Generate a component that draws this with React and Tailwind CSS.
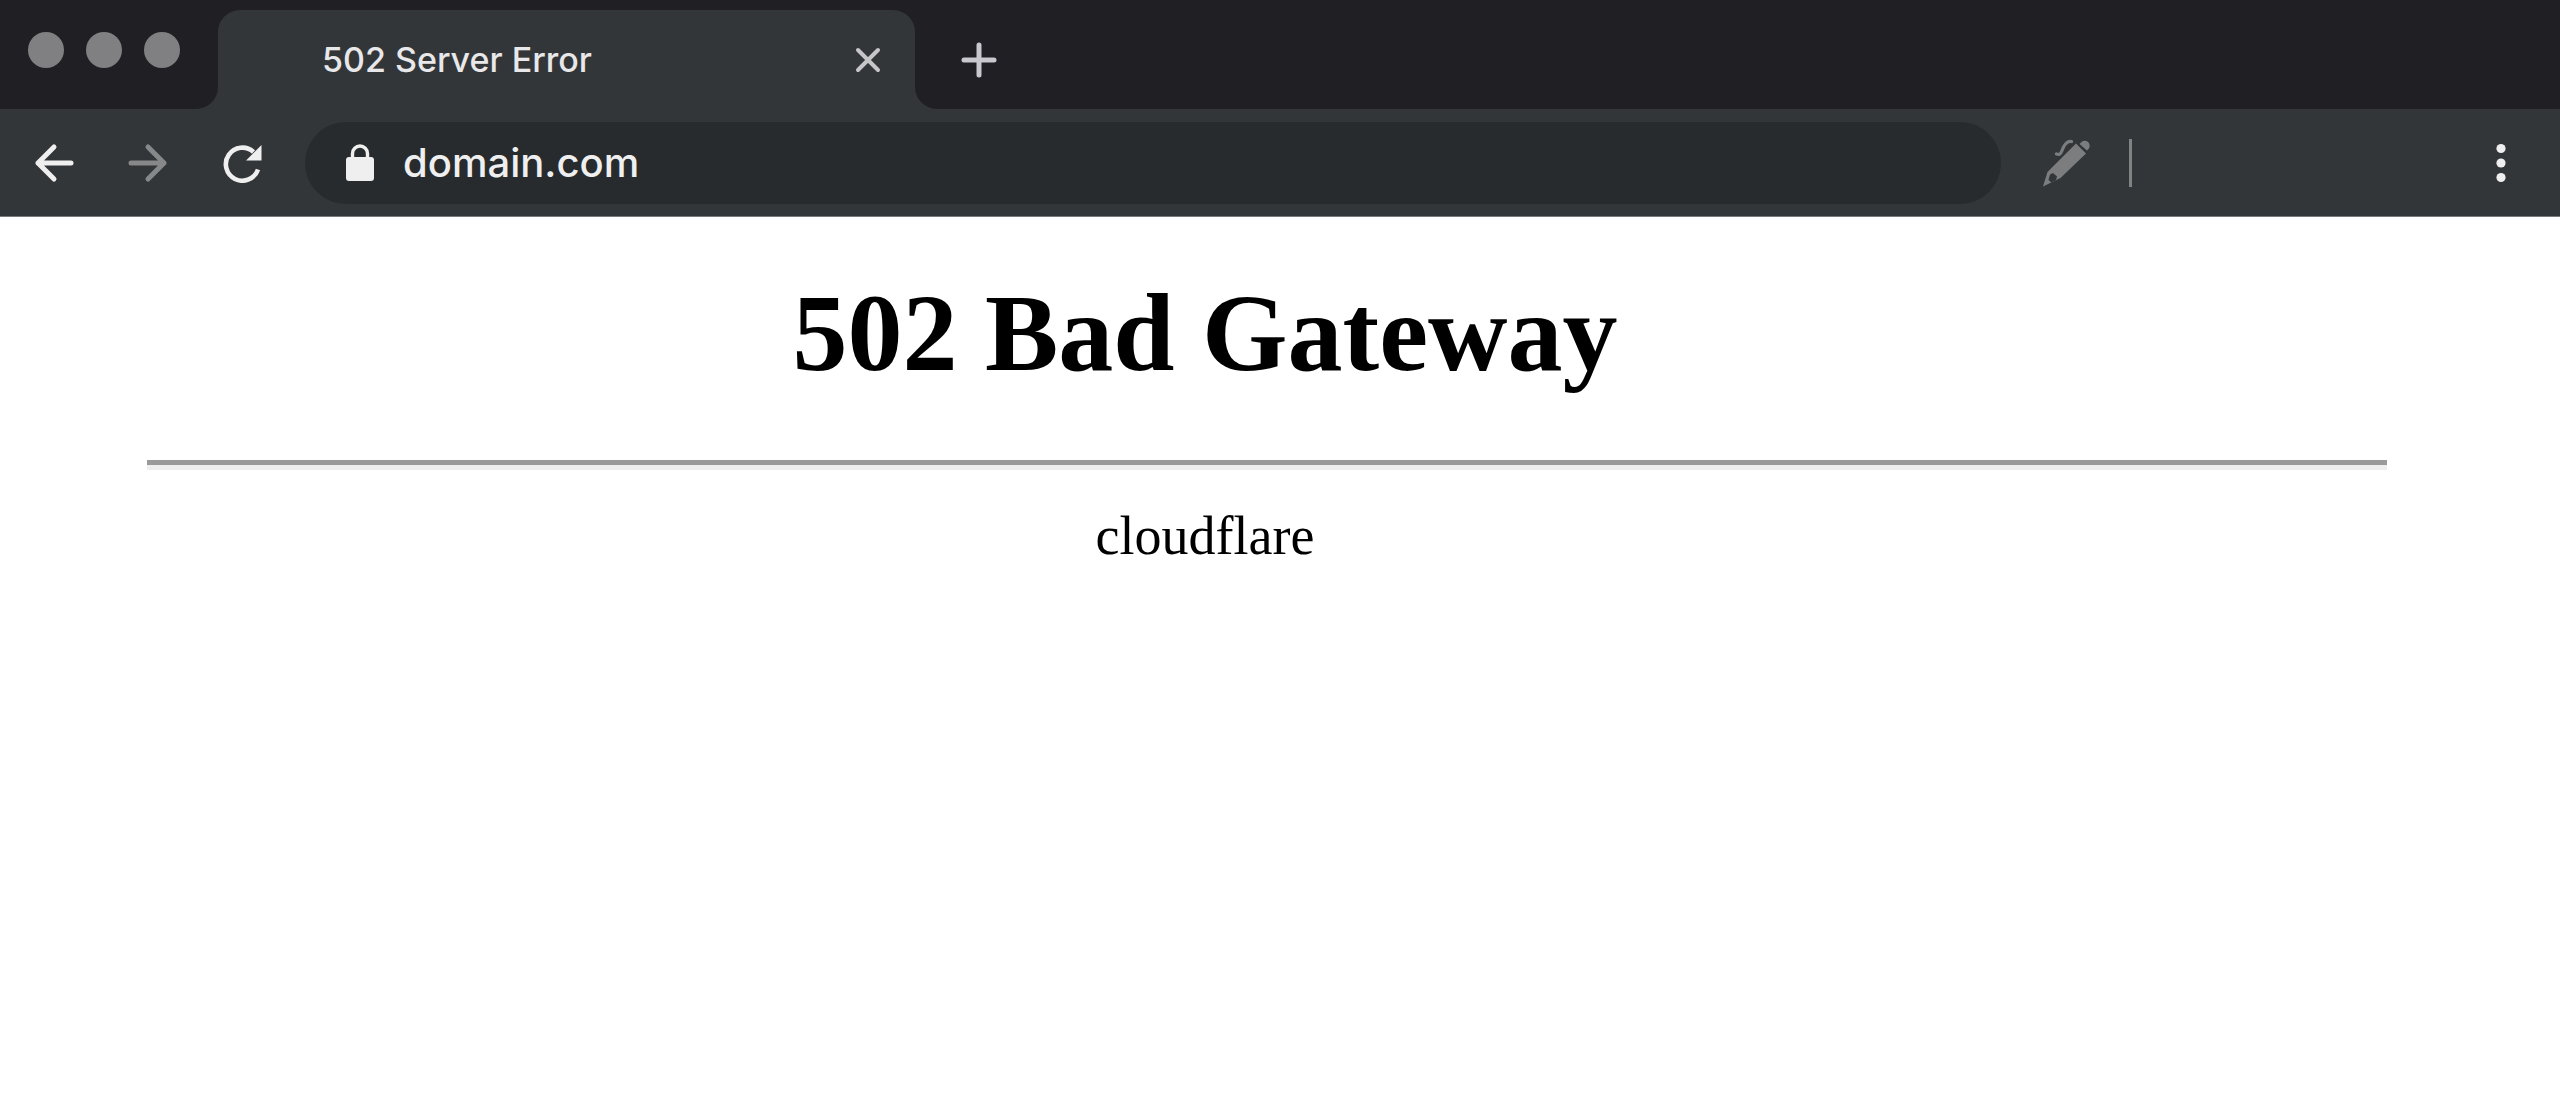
function TabBar() {
    return (
        <div className="flex h-[109px] bg-[#333638]">
            {/* Window controls */}
            <div className="flex w-[218px] shrink-0 gap-[22px] rounded-br-[22px] bg-[#201f24] pt-8 pl-7">
                <button aria-label="Close window" className="size-9 rounded-full bg-[#808083]" />
                <button aria-label="Minimize window" className="size-9 rounded-full bg-[#808083]" />
                <button aria-label="Zoom window" className="size-9 rounded-full bg-[#808083]" />
            </div>

            {/* Active tab */}
            <div className="w-[697px] shrink-0 bg-[#201f24] pt-[10px]">
                <div className="flex h-full items-center justify-between rounded-t-[22px] bg-[#333638] pr-[34px] pl-[104px]">
                    <span className="text-[34px] leading-[44px] font-medium text-[#e8e8ea]">
                        502 Server Error
                    </span>
                    <button aria-label="Close tab" className="text-[#c6c6c9]">
                        <svg
                            viewBox="0 0 26 26"
                            className="size-[26px]"
                            fill="none"
                            stroke="currentColor"
                            strokeWidth={4}
                            strokeLinecap="round"
                        >
                            <path d="M3 3l20 20M23 3L3 23" />
                        </svg>
                    </button>
                </div>
            </div>

            {/* Rest of the strip */}
            <div className="flex flex-1 items-center rounded-bl-[22px] bg-[#201f24] pt-[10px] pl-[46px]">
                <button aria-label="New tab" className="text-[#c9c8ce]">
                    <svg
                        viewBox="0 0 36 36"
                        className="size-9"
                        fill="none"
                        stroke="currentColor"
                        strokeWidth={5}
                        strokeLinecap="round"
                    >
                        <path d="M18 3v30M3 18h30" />
                    </svg>
                </button>
            </div>
        </div>
    );
}

function ArrowIcon({ className }) {
    return (
        <svg
            viewBox="0 0 40 40"
            className={className}
            fill="none"
            stroke="currentColor"
            strokeWidth={5}
            strokeLinecap="round"
            strokeLinejoin="round"
        >
            <path d="M37 20H4M20 4L4 20l16 16" />
        </svg>
    );
}

function ReloadIcon() {
    return (
        <svg viewBox="0 0 40 40" className="size-10">
            <path
                d="M36 26.500A16.500 16.500 0 1 1 31.500 9"
                fill="none"
                stroke="currentColor"
                strokeWidth={4.600}
            />
            <path d="M39.500 2v15.500H24z" fill="currentColor" />
        </svg>
    );
}

function PencilIcon() {
    return (
        <svg viewBox="0 0 48 48" className="size-12">
            <path
                d="M34 4.500L44 14.500 18.500 39 1 47.500 5.500 33z"
                fill="currentColor"
            />
            <path d="M8 35.500l3-1.500 4 3.500-1 3.500-4.500 2.500-3-2.500z" fill="#333638" />
            <path
                d="M39 3.500a4.500 4.500 0 0 1 7.500 6.500l-1.500 1.500L37.500 5z"
                fill="currentColor"
            />
            <path
                d="M14.500 15c6 2 4.500-5 9-10 2-2.500 4-3 6-2.500"
                fill="none"
                stroke="currentColor"
                strokeWidth={3.200}
                strokeLinecap="round"
            />
        </svg>
    );
}

function Toolbar() {
    return (
        <div className="flex h-[108px] items-center border-b border-[#77797b] bg-[#333638] pr-[54px] pl-[34px] text-[#efeff0]">
            <button aria-label="Back">
                <ArrowIcon className="size-10" />
            </button>
            <button aria-label="Forward" className="ml-[54px] text-[#868889]" disabled>
                <ArrowIcon className="size-10 rotate-180" />
            </button>
            <button aria-label="Reload" className="ml-[54px]">
                <ReloadIcon />
            </button>

            {/* Address bar */}
            <div className="ml-[43px] flex h-[82px] flex-1 items-center rounded-full bg-[#282b2d] pl-[41px]">
                <svg viewBox="0 0 28 38" className="h-[38px] w-7 shrink-0">
                    <rect y="13" width="28" height="24" rx="3" fill="currentColor" />
                    <path
                        d="M6.500 15V9.500a7.500 7.500 0 0 1 15 0V15"
                        fill="none"
                        stroke="currentColor"
                        strokeWidth={3.400}
                    />
                </svg>
                <input
                    type="text"
                    aria-label="Address"
                    defaultValue="domain.com"
                    className="ml-[29px] min-w-0 flex-1 bg-transparent text-[40px] leading-[48px] font-medium outline-none"
                />
            </div>

            <button aria-label="Edit" className="ml-[41px] text-[#7b7d7e]">
                <PencilIcon />
            </button>
            <div className="ml-[39px] h-12 w-[3px] bg-[#808284]" />
            <button aria-label="Menu" className="ml-[364px]">
                <svg viewBox="0 0 10 40" className="h-10 w-[10px]" fill="currentColor">
                    <circle cx="5" cy="5.500" r="4.600" />
                    <circle cx="5" cy="20" r="4.600" />
                    <circle cx="5" cy="34.500" r="4.600" />
                </svg>
            </button>
        </div>
    );
}

function ErrorPage() {
    return (
        <main className="pt-[54px] pr-[173px] pl-[147px] font-['Liberation_Serif',serif] text-black">
            <h1 className="pr-[124px] text-center text-[110px] leading-[124px] font-bold">
                502 Bad Gateway
            </h1>
            <hr className="mt-[65px] h-[10px] border-0 border-t-[5px] border-[#9a9a9a] bg-[#eeeeee]" />
            <p className="mt-[34px] pr-[124px] text-center text-[54px] leading-[64px]">
                cloudflare
            </p>
        </main>
    );
}

export default function App() {
    return (
        <div className="min-h-screen bg-white font-['Inter',sans-serif]">
            <TabBar />
            <Toolbar />
            <ErrorPage />
        </div>
    );
}
